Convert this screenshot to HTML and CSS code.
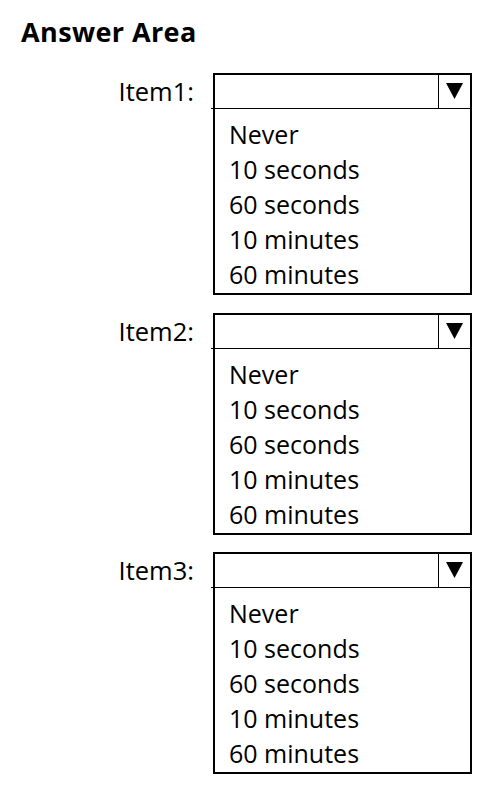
FILE: index.html
```html
<!DOCTYPE html>
<html lang="en">
<head>
<meta charset="utf-8">
<title>Answer Area</title>
<link rel="stylesheet" href="styles.css">
</head>
<body>
<main class="page">
  <h1 class="title">Answer Area</h1>
  <div class="items">
    <div class="item">
      <span class="label">Item1:</span>
      <div class="dropdown">
        <div class="head">
          <span class="value"></span>
          <span class="arrow"><svg width="17" height="16" viewBox="0 0 17 16"><polygon points="0,0 17,0 8.5,16" fill="#000"/></svg></span>
        </div>
        <ul class="options">
          <li>Never</li>
          <li>10 seconds</li>
          <li>60 seconds</li>
          <li>10 minutes</li>
          <li>60 minutes</li>
        </ul>
      </div>
    </div>
    <div class="item">
      <span class="label">Item2:</span>
      <div class="dropdown">
        <div class="head">
          <span class="value"></span>
          <span class="arrow"><svg width="17" height="16" viewBox="0 0 17 16"><polygon points="0,0 17,0 8.5,16" fill="#000"/></svg></span>
        </div>
        <ul class="options">
          <li>Never</li>
          <li>10 seconds</li>
          <li>60 seconds</li>
          <li>10 minutes</li>
          <li>60 minutes</li>
        </ul>
      </div>
    </div>
    <div class="item">
      <span class="label">Item3:</span>
      <div class="dropdown">
        <div class="head">
          <span class="value"></span>
          <span class="arrow"><svg width="17" height="16" viewBox="0 0 17 16"><polygon points="0,0 17,0 8.5,16" fill="#000"/></svg></span>
        </div>
        <ul class="options">
          <li>Never</li>
          <li>10 seconds</li>
          <li>60 seconds</li>
          <li>10 minutes</li>
          <li>60 minutes</li>
        </ul>
      </div>
    </div>
  </div>
</main>
</body>
</html>
```

FILE: styles.css
```css
html, body {
  margin: 0;
  padding: 0;
  background: #fff;
}
body {
  font-family: "Open Sans", "Noto Sans", sans-serif;
  color: #000;
}
.page {
  padding: 14px 0 0 21px;
}
.title {
  margin: 0;
  font-size: 27px;
  font-weight: 700;
  line-height: 36px;
  letter-spacing: 0.4px;
}
.items {
  display: flex;
  flex-direction: column;
  gap: 17.5px;
  margin-top: 23px;
}
.item {
  display: grid;
  grid-template-columns: 173px 259px;
  column-gap: 19px;
  align-items: start;
}
.label {
  text-align: right;
  font-size: 25.5px;
  line-height: 36px;
}
.dropdown {
  border: 2px solid #000;
  height: 218px;
}
.head {
  display: flex;
  height: 33px;
  border-bottom: 1px solid #000;
  margin-left: -4px;
}
.value {
  flex: 1;
}
.arrow {
  width: 32px;
  border-left: 1px solid #000;
  display: flex;
  justify-content: center;
  padding-top: 8px;
  box-sizing: border-box;
}
.arrow svg {
  display: block;
}
.options {
  list-style: none;
  margin: 0;
  padding: 8px 0 0 14px;
}
.options li {
  font-size: 25px;
  line-height: 35px;
}
```
